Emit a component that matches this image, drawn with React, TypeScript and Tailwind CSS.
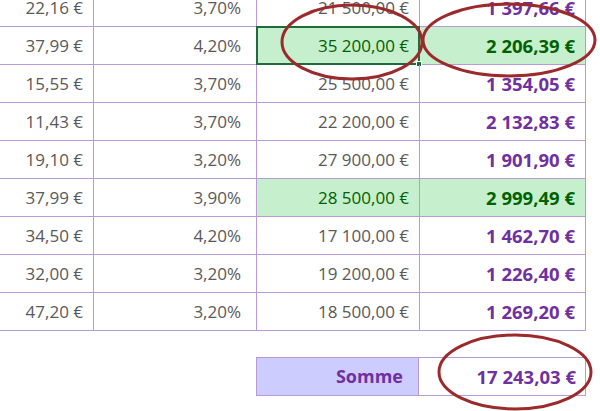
const rows = [
  { price: "22,16 €", rate: "3,70%", amount: "21 500,00 €", total: "1 397,66 €" },
  { price: "37,99 €", rate: "4,20%", amount: "35 200,00 €", total: "2 206,39 €", hot: true, selected: true },
  { price: "15,55 €", rate: "3,70%", amount: "25 500,00 €", total: "1 354,05 €" },
  { price: "11,43 €", rate: "3,70%", amount: "22 200,00 €", total: "2 132,83 €" },
  { price: "19,10 €", rate: "3,20%", amount: "27 900,00 €", total: "1 901,90 €" },
  { price: "37,99 €", rate: "3,90%", amount: "28 500,00 €", total: "2 999,49 €", hot: true },
  { price: "34,50 €", rate: "4,20%", amount: "17 100,00 €", total: "1 462,70 €" },
  { price: "32,00 €", rate: "3,20%", amount: "19 200,00 €", total: "1 226,40 €" },
  { price: "47,20 €", rate: "3,20%", amount: "18 500,00 €", total: "1 269,20 €" },
];

const App = () => {
  return (
    <div
      className="relative h-[411px] w-[600px] overflow-hidden bg-white"
      style={{ fontFamily: '"Open Sans", "Liberation Sans", sans-serif' }}
    >
      {/* Table rows (first row is scrolled partly out of view) */}
      <div className="mt-[-11px] w-[586px]">
        {rows.map((r, i) => (
          <div
            key={i}
            className="flex h-[38px] border-b border-[#b89ad6] text-[17px] text-[#595959]"
          >
            <div className="flex w-[94px] shrink-0 items-center justify-end border-r border-[#b89ad6] pr-[10px]">
              {r.price}
            </div>
            <div className="flex w-[163px] shrink-0 items-center justify-end border-r border-[#b89ad6] pr-[15px]">
              {r.rate}
            </div>
            <div
              className={`relative flex w-[163px] shrink-0 items-center justify-end border-r border-[#b89ad6] pr-[10px] ${
                r.hot ? "bg-[#c6efce] text-[#006100]" : ""
              }`}
            >
              {r.selected && (
                <div className="absolute inset-[-1px] border-2 border-[#1f6b3a]">
                  <div className="absolute right-[-4px] bottom-[-4px] h-[6px] w-[6px] border border-white bg-[#1f6b3a]" />
                </div>
              )}
              <span className="relative">{r.amount}</span>
            </div>
            <div
              className={`flex w-[166px] shrink-0 items-center justify-end border-r border-[#b89ad6] pr-[10px] text-[18.5px] font-bold ${
                r.hot ? "bg-[#c6efce] text-[#006100]" : "text-[#7030a0]"
              }`}
            >
              {r.total}
            </div>
          </div>
        ))}
      </div>

      {/* Sum row */}
      <div className="mt-[26px] ml-[256px] flex h-[39px] w-[330px] border border-[#b89ad6] text-[18px] font-bold text-[#7030a0]">
        <div className="flex w-[162px] items-center justify-end border-r border-[#b89ad6] bg-[#ccccff] pr-[15px]">
          Somme
        </div>
        <div className="flex flex-1 items-center justify-end pr-[9px] text-[18.5px]">
          17 243,03 €
        </div>
      </div>

      {/* Hand-drawn highlight circles */}
      <svg
        className="pointer-events-none absolute inset-0"
        width="600"
        height="411"
        viewBox="0 0 600 411"
        fill="none"
      >
        <ellipse cx="352" cy="42" rx="70" ry="37" stroke="#9b2a2c" strokeWidth="3" />
        <ellipse cx="509" cy="40" rx="86" ry="36" stroke="#9b2a2c" strokeWidth="3" />
        <ellipse cx="515" cy="372" rx="76" ry="37" stroke="#9b2a2c" strokeWidth="3" />
      </svg>
    </div>
  );
};

export default App;
